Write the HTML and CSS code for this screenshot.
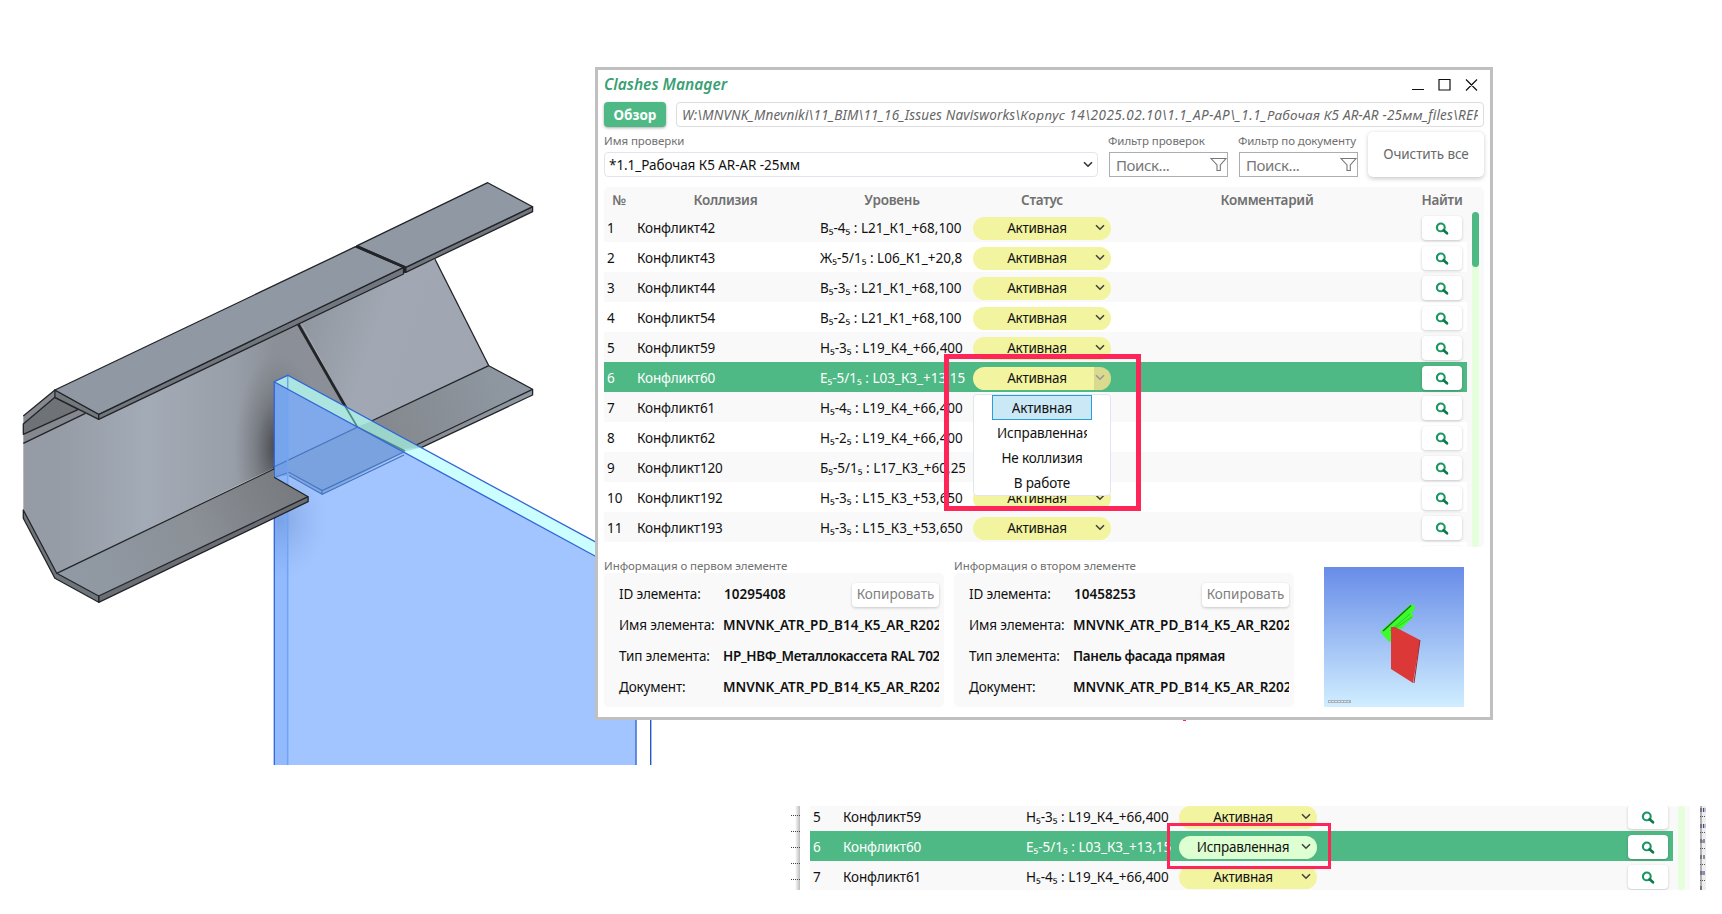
FILE: index.html
```html
<!DOCTYPE html>
<html lang="ru">
<head>
<meta charset="utf-8">
<title>Clashes Manager</title>
<link rel="stylesheet" href="styles.css">
</head>
<body>
<svg class="defs" width="0" height="0">
  <symbol id="chev" viewBox="0 0 10 7"><path d="M1 1.2 5 5.2 9 1.2" fill="none" stroke="currentColor" stroke-width="1.6"/></symbol>
  <symbol id="lens" viewBox="0 0 14 14"><circle cx="5.8" cy="5.4" r="3.9" fill="none" stroke="#1a9662" stroke-width="2.1"/><path d="M8.6 8.2 12 11.3" stroke="#0e7a4c" stroke-width="2.7" stroke-linecap="round"/></symbol>
  <symbol id="funnel" viewBox="0 0 17 15"><path d="M1 1.5H16L10.3 8V13.5H7V8Z" fill="none" stroke="#777" stroke-width="1.1"/></symbol>
</svg>
<main class="stage">
  <svg class="model" width="660" height="780" viewBox="0 0 660 780">
    <defs>
      <linearGradient id="web" gradientUnits="userSpaceOnUse" x1="60" y1="440" x2="274" y2="440"><stop offset="0" stop-color="#959ca6"/><stop offset=".4" stop-color="#a3abb6"/><stop offset=".8" stop-color="#999fa9"/><stop offset="1" stop-color="#8b9098"/></linearGradient>
      <linearGradient id="web2" gradientUnits="userSpaceOnUse" x1="300" y1="320" x2="480" y2="380"><stop offset="0" stop-color="#8f969f"/><stop offset=".4" stop-color="#a1a8b3"/><stop offset="1" stop-color="#9fa6b1"/></linearGradient>
      <linearGradient id="low" gradientUnits="userSpaceOnUse" x1="80" y1="590" x2="290" y2="480"><stop offset="0" stop-color="#919aa4"/><stop offset=".55" stop-color="#8b9097"/><stop offset="1" stop-color="#777a7e"/></linearGradient>
      <linearGradient id="low2" gradientUnits="userSpaceOnUse" x1="390" y1="440" x2="520" y2="385"><stop offset="0" stop-color="#85898f"/><stop offset="1" stop-color="#8f98a2"/></linearGradient>
      <radialGradient id="shade"><stop offset="0" stop-color="#2c2d2e" stop-opacity=".8"/><stop offset=".5" stop-color="#4a4c50" stop-opacity=".35"/><stop offset="1" stop-color="#666" stop-opacity="0"/></radialGradient>
      <radialGradient id="haze"><stop offset="0" stop-color="#5578b8" stop-opacity=".4"/><stop offset="1" stop-color="#7ba0e8" stop-opacity="0"/></radialGradient>
      <clipPath id="webclip"><path d="M23.3 443 98.7 414 403.5 272 435 259.3 488.8 365.7 56.7 573.3 23.3 510Z"/></clipPath>
      <clipPath id="panelclip"><path d="M274 381.7 595 556H636.5V765H274Z"/></clipPath>
    </defs>
    <g stroke="#222427" stroke-width="1.3" stroke-linejoin="round">
      <path d="M23.3 443 85 413 298.3 318 357.2 427.3 56.7 573.3 23.3 510Z" fill="url(#web)" stroke="none"/>
      <path d="M298.3 318 435 259.3 488.8 365.7 357.2 427.3Z" fill="url(#web2)" stroke="none"/>
      <path d="M435 259.3 488.8 365.7" fill="none"/>
      <g clip-path="url(#webclip)" stroke="none"><ellipse cx="278" cy="448" rx="44" ry="95" fill="url(#shade)"/></g>
      <path d="M488.8 365.7 532.6 389.3V395L322.2 494.3 288.9 475 274 477.3V467Z" fill="url(#low2)"/>
      <path d="M532.6 389.3 322.2 490" fill="none"/>
      <path d="M298.3 324.3 357.2 427.3" stroke-width="2.8"/>
      <path d="M23.3 416 54.9 390 85.4 413.3 23.3 443.3Z" fill="#85898f" stroke="none"/>
      <path d="M23.3 424 54.9 397.3 78.4 409.3 23.3 434.3Z" fill="#6f7276"/>
      <path d="M23.3 416 54.9 390M23.3 443.3 85.4 413.3" fill="none"/>
      <path d="M54.9 390 98.7 414.3 98.7 419.3 54.9 397.3Z" fill="#73787f"/>
      <path d="M98.7 414.3 403.5 267.3V274L98.7 419.3Z" fill="#72777f"/>
      <path d="M54.9 390 355.5 246.7 403.5 267.3 98.7 414.3Z" fill="#9099a3"/>
      <path d="M405.7 267.3 532.6 206.7V211.7L405.7 272.3Z" fill="#72777f"/>
      <path d="M357.2 245.7 487.7 182.7 532.6 206.7 405.7 267.3Z" fill="#9099a3"/>
      <path d="M356 246.2 404.8 267.3V273" fill="none" stroke-width="2.8"/>
    </g>
    <path d="M274 381.7 287.7 375.3 595 541.7 636.5 564V577L595 556Z" fill="#cbffff"/>
    <path d="M274 381.7 287.7 375.3 421 447.500 404 452Z" fill="#5f9d90" fill-opacity=".28"/>
    <path d="M357 427 403 449 421 447.500 372 421Z" fill="#72ae9c" fill-opacity=".3"/>
    <path d="M345 406 358 428M357 427 405 451" stroke="#4e8b82" stroke-width="1.6"/>
    <path d="M274 381.7 595 556H636.5V765H274Z" fill="#a2c5ff"/>
    <g clip-path="url(#panelclip)">
      <path d="M274 381.7 404 452 322.2 494.3 288.9 475 274 477.3Z" fill="#7fa9ea"/>
      <path d="M274 467 357.2 427.3 404 452 322.2 492 288.9 473 274 477Z" fill="#7aa2df"/>
      <path d="M274 467 357.2 427.3M404 452 322.2 490.5 288.9 472.3 276 477M404 455 322.2 494.3 288.9 475.5M322 491V494" fill="none" stroke="#4675bb" stroke-width="1.2"/>
      <ellipse cx="280" cy="520" rx="48" ry="60" fill="url(#haze)"/>
      <path d="M274 380V765H287.7V389Z" fill="#5a98f8" fill-opacity=".22"/>
    </g>
    <path d="M287.7 376V765" stroke="#70a4f3" stroke-width="1.5"/>
    <path d="M274.3 765V381.7L287.7 375.3 600 544.4M274 381.7 600 558.7M636 720V765" fill="none" stroke="#3365d6" stroke-width="1.3"/>
    <path d="M650.7 719V765" stroke="#2458c8" stroke-width="1.4"/>
    <g stroke="#222427" stroke-width="1.3" stroke-linejoin="round">
      <path d="M56.7 573.3 274.1 469V477.3L308.1 496.7 98.7 596Z" fill="url(#low)" stroke="none"/>
      <path d="M56.7 573.3 274 469M274.1 477.3 308.1 496.7" fill="none"/>
      <path d="M98.7 596 308.1 496.7V501.7L98.7 602.3Z" fill="#6b6f75"/>
      <path d="M23.3 510 56.7 573.3 98.7 596V602.3L54.9 578.3 23.3 518.3Z" fill="#6f757c"/>
    </g>
  </svg>

  <section class="window">
    <header class="titlebar">
      <h1 class="title">Clashes Manager</h1>
      <svg class="winctl" width="68" height="16" viewBox="0 0 68 16"><path d="M1 12.5H13M28 2.5H39V13H28ZM55 2.5 66 13.5M66 2.5 55 13.5" fill="none" stroke="#111" stroke-width="1.2"/></svg>
    </header>
    <div class="pathrow">
      <button class="browse">Обзор</button>
      <div class="path"><div class="clip"><span class="p1">W:\MNVNK_Mnevniki\11_BIM\11_16_Issues Navisworks\</span><span class="p2">Корпус 14\2025.02.10\1.1_AP-AP\_1.1_</span><span class="p3">Рабочая К5 AR-AR -25мм_files\REP</span></div></div>
    </div>
    <div class="filters">
      <div class="field check"><label class="cap">Имя проверки</label><div class="combo"><span>*1.1_Рабочая К5 AR-AR -25мм</span><svg width="10" height="7"><use href="#chev"/></svg></div></div>
      <div class="field"><label class="cap c2">Фильтр проверок</label><div class="search"><span>Поиск...</span><svg width="17" height="15"><use href="#funnel"/></svg></div></div>
      <div class="field"><label class="cap c3">Фильтр по документу</label><div class="search"><span>Поиск...</span><svg width="17" height="15"><use href="#funnel"/></svg></div></div>
      <button class="clear">Очистить все</button>
    </div>
    <div class="table">
      <div class="head"><span>№</span><span>Коллизия</span><span>Уровень</span><span>Статус</span><span>Комментарий</span><span>Найти</span></div>
      <div class="body">
        <div class="rows">
          <div class="row"><span class="n">1</span><span class="name">Конфликт42</span><span class="lvl">В₅-4₅ : L21_К1_+68,100</span><span class="pill"><b>Активная</b><svg width="10" height="7"><use href="#chev"/></svg></span><button class="find"><svg width="14" height="14"><use href="#lens"/></svg></button></div>
          <div class="row"><span class="n">2</span><span class="name">Конфликт43</span><span class="lvl">Ж₅-5/1₅ : L06_К1_+20,8</span><span class="pill"><b>Активная</b><svg width="10" height="7"><use href="#chev"/></svg></span><button class="find"><svg width="14" height="14"><use href="#lens"/></svg></button></div>
          <div class="row"><span class="n">3</span><span class="name">Конфликт44</span><span class="lvl">В₅-3₅ : L21_К1_+68,100</span><span class="pill"><b>Активная</b><svg width="10" height="7"><use href="#chev"/></svg></span><button class="find"><svg width="14" height="14"><use href="#lens"/></svg></button></div>
          <div class="row"><span class="n">4</span><span class="name">Конфликт54</span><span class="lvl">В₅-2₅ : L21_К1_+68,100</span><span class="pill"><b>Активная</b><svg width="10" height="7"><use href="#chev"/></svg></span><button class="find"><svg width="14" height="14"><use href="#lens"/></svg></button></div>
          <div class="row"><span class="n">5</span><span class="name">Конфликт59</span><span class="lvl">Н₅-3₅ : L19_К4_+66,400</span><span class="pill"><b>Активная</b><svg width="10" height="7"><use href="#chev"/></svg></span><button class="find"><svg width="14" height="14"><use href="#lens"/></svg></button></div>
          <div class="row sel"><span class="n">6</span><span class="name">Конфликт60</span><span class="lvl">Е₅-5/1₅ : L03_К3_+13,15</span><span class="pill open"><b>Активная</b><svg width="10" height="7"><use href="#chev"/></svg></span><button class="find"><svg width="14" height="14"><use href="#lens"/></svg></button></div>
          <div class="row"><span class="n">7</span><span class="name">Конфликт61</span><span class="lvl">Н₅-4₅ : L19_К4_+66,400</span><span class="pill"></span><button class="find"><svg width="14" height="14"><use href="#lens"/></svg></button></div>
          <div class="row"><span class="n">8</span><span class="name">Конфликт62</span><span class="lvl">Н₅-2₅ : L19_К4_+66,400</span><span class="pill"></span><button class="find"><svg width="14" height="14"><use href="#lens"/></svg></button></div>
          <div class="row"><span class="n">9</span><span class="name">Конфликт120</span><span class="lvl">Б₅-5/1₅ : L17_К3_+60,25</span><span class="pill"></span><button class="find"><svg width="14" height="14"><use href="#lens"/></svg></button></div>
          <div class="row"><span class="n">10</span><span class="name">Конфликт192</span><span class="lvl">Н₅-3₅ : L15_К3_+53,650</span><span class="pill"><b>Активная</b><svg width="10" height="7"><use href="#chev"/></svg></span><button class="find"><svg width="14" height="14"><use href="#lens"/></svg></button></div>
          <div class="row"><span class="n">11</span><span class="name">Конфликт193</span><span class="lvl">Н₅-3₅ : L15_К3_+53,650</span><span class="pill"><b>Активная</b><svg width="10" height="7"><use href="#chev"/></svg></span><button class="find"><svg width="14" height="14"><use href="#lens"/></svg></button></div>
          <div class="row"><span class="n"></span><span class="name"></span><span class="lvl"></span><span class="pill"></span><button class="find"></button></div>
        </div>
        <div class="track"><div class="thumb"></div></div>
      </div>
    </div>
    <div class="bottom">
      <div class="info">
        <h2 class="cap">Информация о первом элементе</h2>
        <dl class="panel">
          <dt>ID элемента:</dt><dd class="id"><span>10295408</span><button class="copy">Копировать</button></dd>
          <dt>Имя элемента:</dt><dd>MNVNK_ATR_PD_B14_K5_AR_R202</dd>
          <dt>Тип элемента:</dt><dd class="cyr">НР_НВФ_Металлокассета RAL 702</dd>
          <dt>Документ:</dt><dd>MNVNK_ATR_PD_B14_K5_AR_R202</dd>
        </dl>
      </div>
      <div class="info">
        <h2 class="cap">Информация о втором элементе</h2>
        <dl class="panel">
          <dt>ID элемента:</dt><dd class="id"><span>10458253</span><button class="copy">Копировать</button></dd>
          <dt>Имя элемента:</dt><dd>MNVNK_ATR_PD_B14_K5_AR_R202</dd>
          <dt>Тип элемента:</dt><dd class="cyr">Панель фасада прямая</dd>
          <dt>Документ:</dt><dd>MNVNK_ATR_PD_B14_K5_AR_R202</dd>
        </dl>
      </div>
      <svg class="preview" width="140" height="140" viewBox="0 0 140 140">
        <defs><linearGradient id="sky" x1="0" y1="0" x2="0" y2="1"><stop offset="0" stop-color="#688ce8"/><stop offset="1" stop-color="#d0eeff"/></linearGradient></defs>
        <rect width="140" height="140" fill="url(#sky)"/>
        <path d="M56 65 87 37 91 39 90 44 87 46 90 49 75 64 70 72 65 75 60 69Z" fill="#3dfc2d"/>
        <path d="M59 64 87 38.500" stroke="#157a12" stroke-width="1.5"/><path d="M66 64 86 47M70 62 88 50" stroke="#27b81c" stroke-width=".7"/>
        <path d="M67 60 71 60 96 73 89 116 67 102Z" fill="#dd3838"/>
        <path d="M96 73 90 116" stroke="#9b2929"/>
        <rect x="4" y="133" width="23" height="3" fill="#a9b4ba"/><path d="M5 134.5H26" stroke="#dce7ec" stroke-dasharray="2 1"/>
      </svg>
    </div>
  </section>

  <ul class="menu"><li class="on"><span>Активная</span></li><li><span>Исправленная</span></li><li><span>Не коллизия</span></li><li><span>В работе</span></li></ul>
  <div class="mark mark-big"></div>
  <div class="speck"></div>

  <div class="edge"><i></i><i></i><i></i><i></i><i></i></div>
  <section class="strip">
    <div class="rows">
      <div class="row"><span class="n">5</span><span class="name">Конфликт59</span><span class="lvl">Н₅-3₅ : L19_К4_+66,400</span><span class="pill"><b>Активная</b><svg width="10" height="7"><use href="#chev"/></svg></span><button class="find"><svg width="14" height="14"><use href="#lens"/></svg></button></div>
      <div class="row sel"><span class="n">6</span><span class="name">Конфликт60</span><span class="lvl">Е₅-5/1₅ : L03_К3_+13,15</span><span class="pill fixed"><b>Исправленная</b><svg width="10" height="7"><use href="#chev"/></svg></span><button class="find"><svg width="14" height="14"><use href="#lens"/></svg></button></div>
      <div class="row"><span class="n">7</span><span class="name">Конфликт61</span><span class="lvl">Н₅-4₅ : L19_К4_+66,400</span><span class="pill"><b>Активная</b><svg width="10" height="7"><use href="#chev"/></svg></span><button class="find"><svg width="14" height="14"><use href="#lens"/></svg></button></div>
    </div>
    <div class="track"></div>
  </section>
  <div class="mark mark-small"></div>
  <svg class="sliver" width="6" height="84" viewBox="0 0 6 84"><rect width="6" height="84" fill="#eee"/><path d="M0 0H2V84H0Z" fill="#888" fill-opacity=".6"/><path d="M1 2V6M3.5 2V6M1 18V22M3.5 18V22M1 33V37M4 33V37M1 49V53M4 49V53M1 65V69M4 65V69M1 80V84" stroke="#5b4a63" stroke-width="1.2"/><path d="M5 2V6M5 18V22M2.5 34V37M2.5 65V69" stroke="#6fa8dc"/><path d="M0 10.500H6M0 26.500H6M0 42.500H6M0 58.500H6M0 74.500H6" stroke="#555" stroke-dasharray="1 1"/></svg>
</main>
</body>
</html>
```
FILE: styles.css
```css
* { box-sizing: border-box; }
body { margin: 0; background: #fff; font-family: "Noto Sans", "Open Sans", sans-serif; font-size: 13.5px; color: #111; }
button { font: inherit; color: inherit; border: 0; padding: 0; background: #fff; display: flex; align-items: center; justify-content: center; }
svg { display: block; flex: none; }
.defs { position: absolute; }
.stage { position: relative; width: 1722px; height: 914px; overflow: hidden; white-space: nowrap; }
.model { position: absolute; left: 0; top: 0; }

.window { position: absolute; left: 595px; top: 67px; width: 898px; height: 653px; border: 3px solid #c0c0c0; background: #fff; padding: 0 6px; }
.titlebar { display: flex; justify-content: space-between; align-items: flex-start; height: 32px; padding: 2px 5px 0 0; }
.title { margin: 0; font-size: 15.5px; line-height: 24px; font-weight: 600; font-style: italic; color: #3a9f73; }
.winctl { margin-top: 5px; }
.pathrow { display: flex; gap: 10px; height: 25px; }
.browse { width: 62px; height: 25px; border-radius: 4px; background: #4fb985; color: #fff; font-weight: 700; box-shadow: 0 1px 3px #0005; }
.path { flex: 1; min-width: 0; border: 1px solid #ddd; border-radius: 4px; padding: 0 5px; font-style: italic; line-height: 24px; color: #666; }
.clip { overflow: hidden; }
.p1 { letter-spacing: .15px; }
.p2 { letter-spacing: .5px; }
.p3 { letter-spacing: .2px; }
.filters { display: flex; height: 50px; }
.field { width: 119px; margin-right: 11px; display: flex; flex-direction: column; justify-content: flex-end; }
.field.check { width: 494px; }
.cap { margin: 0; font-size: 11.5px; font-weight: 400; line-height: 16px; height: 19px; color: #707070; letter-spacing: -.06px; }
.c2 { margin-left: -1px; }
.c3 { margin-left: -1px; letter-spacing: -.12px; }
.combo { height: 25px; border: 1px solid #e1e5ee; border-radius: 4px; display: flex; align-items: center; justify-content: space-between; padding: 0 4px; letter-spacing: -.06px; }
.combo svg { color: #333; }
.search { height: 25px; border: 1px solid #abadb3; display: flex; align-items: center; justify-content: space-between; padding: 0 0 0 6px; font-size: 15px; letter-spacing: -.4px; color: #777; }
.clear { width: 116px; height: 45px; margin: 5px 0 0 -1px; border-radius: 5px; color: #6a6a6a; box-shadow: 0 1.5px 4px #0003; letter-spacing: -.1px; padding-bottom: 1px; }

.table { margin-top: 10px; height: 360px; background: #f9f9f9; border-radius: 5px; overflow: hidden; }
.head { display: grid; grid-template-columns: 30px 183px 150px 150px 300px 50px; height: 25px; line-height: 26px; text-align: center; font-weight: 600; color: #707070; letter-spacing: -.25px; }
.body { display: flex; gap: 5px; height: 335px; }
.rows { width: 863px; }
.row { display: grid; grid-template-columns: 30px 183px 145px 138px 40px; height: 30px; align-items: center; padding: 1px 0 0 3px; line-height: 30px; }
.row:nth-child(even) { background: #fff; }
.row .pill { margin-left: 8px; width: 138px; }
.row .find { margin-left: 319px; }
.row.sel { background: #4fb985; color: #fff; }
.name { letter-spacing: -.15px; }
.lvl { overflow: hidden; height: 30px; }
.pill { height: 23px; border-radius: 11.5px; background: #f3f49f; color: #111; overflow: hidden; display: flex; align-items: center; padding-right: 6px; }
.pill b { flex: 1; text-align: center; font-weight: 400; line-height: 24px; padding-left: 6px; letter-spacing: -.25px; }
.pill svg { color: #444; margin-top: -1px; }
.pill.open { background: linear-gradient(90deg, #f3f49f 121px, #dada8e 121px); }
.pill.open svg { color: #999; }
.pill.fixed { background: #deffd2; }
.find { width: 40px; height: 24px; border-radius: 4px; box-shadow: 0 1px 3px #0003; }
.find svg { margin-top: 1px; }
.track { width: 7px; background: #e5ffdc; border-radius: 3.5px; }
.thumb { height: 55px; border-radius: 3.5px; background: #4fb985; }

.bottom { display: flex; gap: 10px; padding-top: 11px; }
.info { width: 340px; }
.info .cap { height: 15px; }
.panel { margin: 0; height: 134px; padding: 6px 5px 0 15px; background: #f9f9f9; border-radius: 5px; display: grid; grid-template-columns: 104px 216px; grid-auto-rows: 31px; line-height: 31px; }
.panel dt { letter-spacing: -.15px; }
.panel dd { margin: 0; font-weight: 600; overflow: hidden; }
.panel .cyr { letter-spacing: -.33px; }
.panel .id { display: flex; justify-content: space-between; align-items: center; overflow: visible; padding-left: 1px; }
.copy { width: 87px; height: 24px; border-radius: 4px; color: #808080; font-weight: 400; line-height: 22px; padding-bottom: 2px; box-shadow: 0 1px 3px #0003; }
.preview { margin: 9px 0 0 20px; }

.menu { position: absolute; left: 973px; top: 394px; width: 138px; height: 102px; margin: 0; padding: 0 18px; list-style: none; background: #fff; border: 1px solid #e1e5ee; border-radius: 4px; letter-spacing: -.15px; }
.menu li { height: 25px; line-height: 27px; display: flex; justify-content: center; }
.menu li span { max-width: 90px; overflow: hidden; }
.menu .on { background: #cbe8f6; border: 1px solid #26a0da; line-height: 25px; }
.mark { position: absolute; border: 5px solid #ff2559; }
.mark-big { left: 944px; top: 354px; width: 197px; height: 157px; }
.mark-small { left: 1167px; top: 823px; width: 164px; height: 46px; border-width: 3px; }
.speck { position: absolute; left: 1183px; top: 720px; width: 3px; height: 1px; background: #ff2559; }

.strip { position: absolute; left: 810px; top: 806px; width: 880px; height: 84px; overflow: hidden; background: #f9f9f9; display: flex; gap: 5px; }
.strip .rows { margin-top: -5px; }
.edge { position: absolute; left: 791px; top: 806px; width: 9px; height: 84px; padding-top: 9px; display: flex; flex-direction: column; gap: 15px; background: linear-gradient(90deg, #fff 4px, #bbb 9px); }
.edge i { border-top: 1px dotted #444; }
.sliver { position: absolute; left: 1700px; top: 806px; }
```
